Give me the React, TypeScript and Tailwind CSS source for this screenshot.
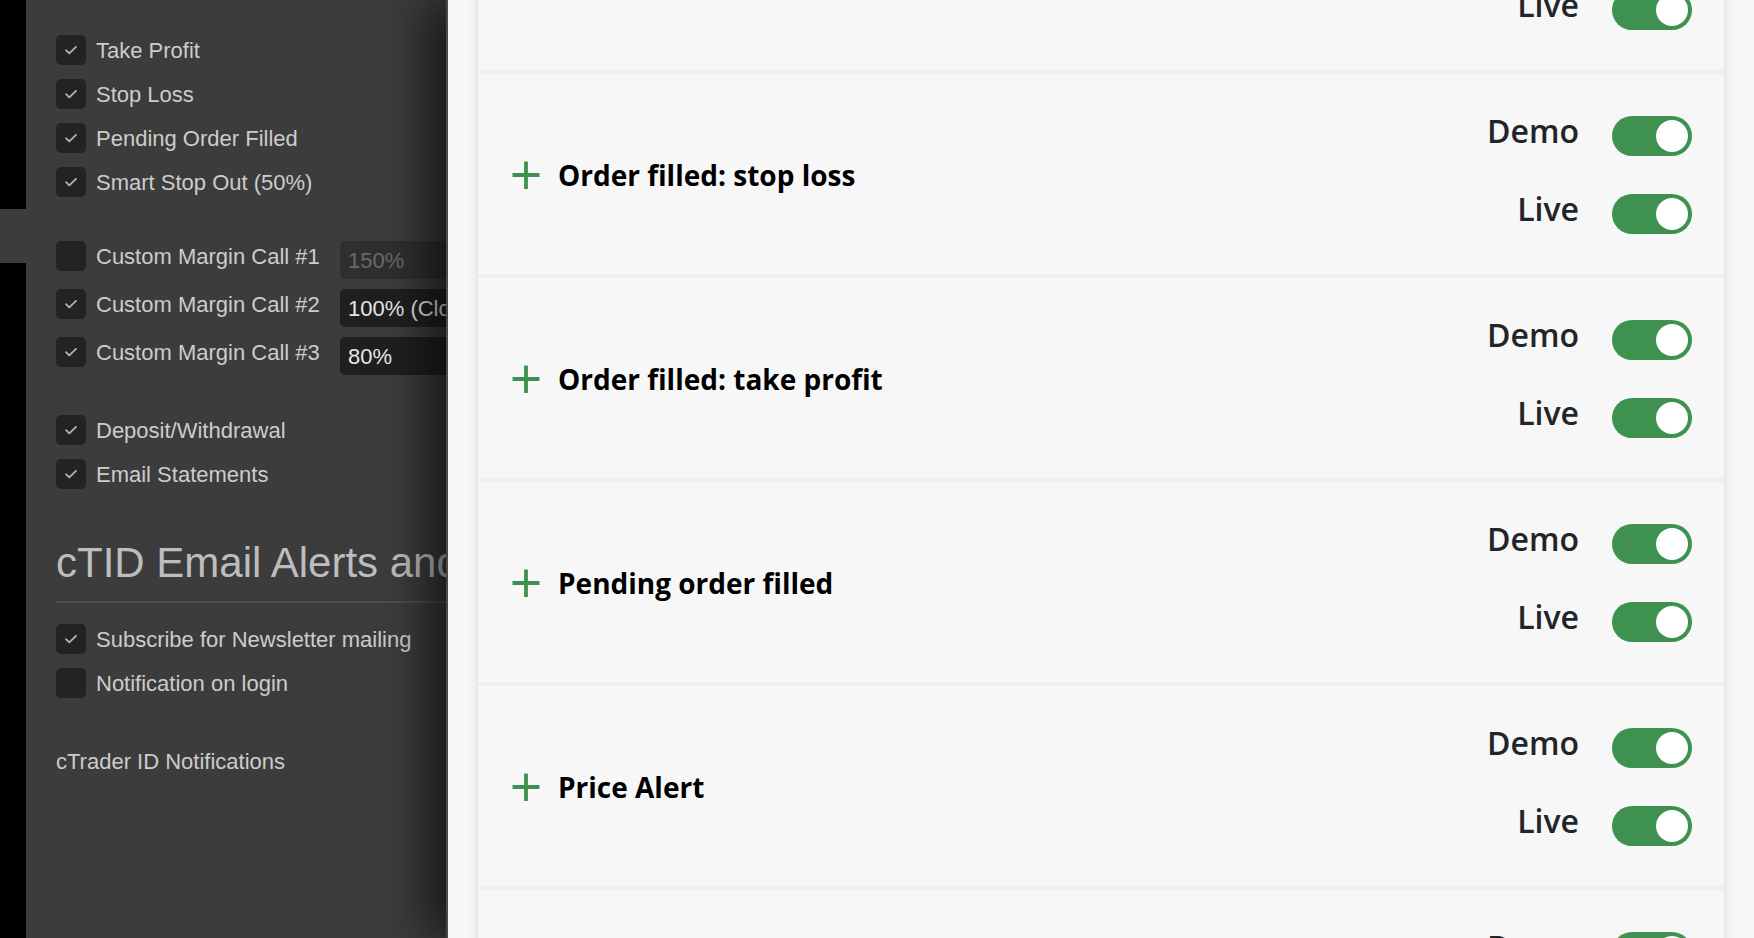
import React from 'react';

interface CheckRowProps {
  label: string;
  checked: boolean;
}

const CheckBox: React.FC<{ checked: boolean }> = ({ checked }) => (
  <span className="flex h-[30px] w-[30px] shrink-0 items-center justify-center rounded-[5px] bg-[#232323]">
    {checked && (
      <svg width="14" height="10" viewBox="0 0 14 10" fill="none">
        <path d="M2 5.2l3.3 3.2L12 1.8" stroke="#b4b4b4" strokeWidth="1.8" strokeLinecap="round" strokeLinejoin="round" />
      </svg>
    )}
  </span>
);

const CheckRow: React.FC<CheckRowProps> = ({ label, checked }) => (
  <div className="flex h-[30px] items-center gap-[10px]">
    <CheckBox checked={checked} />
    <span className="whitespace-nowrap text-[22px] text-[#cccccc]">{label}</span>
  </div>
);

const marginCalls = [
  { label: 'Custom Margin Call #1', checked: false, value: '150%' },
  { label: 'Custom Margin Call #2', checked: true, value: '100% (Close Out)' },
  { label: 'Custom Margin Call #3', checked: true, value: '80%' }
];

const alerts = [
  'Position closed',
  'Order filled: stop loss',
  'Order filled: take profit',
  'Pending order filled',
  'Price Alert',
  'Trailing stop triggered'
];

const PlusIcon = () => (
  <svg width="28" height="28" viewBox="0 0 28 28" className="shrink-0">
    <path d="M14 0.5v28M0.5 14h27" stroke="#3f9150" strokeWidth="3.8" />
  </svg>
);

const Toggle = () => (
  <div className="flex h-[40px] w-[80px] shrink-0 items-center justify-end rounded-full bg-[#3f9150] pr-[4px]">
    <div className="h-[32px] w-[32px] rounded-full bg-white" />
  </div>
);

const AlertCard: React.FC<{ title: string }> = ({ title }) => (
  <div className="flex h-[200px] shrink-0 items-center justify-between bg-[#f7f7f7] pl-[34px] pr-[32px]">
    <div className="flex items-center gap-[18px] pt-[2px]">
      <PlusIcon />
      <span className="font-['Open_Sans',sans-serif] text-[28px] font-bold text-black">{title}</span>
    </div>
    <div className="flex flex-col gap-[38px] pt-[2px]">
      {['Demo', 'Live'].map((env) => (
        <div key={env} className="flex h-[40px] items-center justify-end gap-[33px]">
          <span className="-mt-[10px] font-['Open_Sans',sans-serif] text-[32px] font-semibold text-[#212529]">{env}</span>
          <Toggle />
        </div>
      ))}
    </div>
  </div>
);

export default function App() {
  return (
    <div className="flex h-[938px] w-full overflow-hidden bg-[#f7f7f7] font-['Liberation_Sans',Arial,sans-serif]">
      {/* nav strip */}
      <div className="flex w-[26px] shrink-0 flex-col">
        <div className="h-[209px] bg-black" />
        <div className="h-[54px] bg-[#3c3c3c]" />
        <div className="flex-1 bg-black" />
      </div>

      {/* settings panel */}
      <div className="w-[420px] shrink-0 overflow-hidden bg-[#3c3c3c] pl-[30px] pt-[35px]">
        <div className="flex flex-col gap-[14px]">
          <CheckRow label="Take Profit" checked />
          <CheckRow label="Stop Loss" checked />
          <CheckRow label="Pending Order Filled" checked />
          <CheckRow label="Smart Stop Out (50%)" checked />
        </div>

        <div className="mt-[44px] flex flex-col gap-[10px]">
          {marginCalls.map((m) => (
            <div key={m.label} className="flex items-start">
              <div className="w-[284px] shrink-0">
                <CheckRow label={m.label} checked={m.checked} />
              </div>
              <div
                className={
                  m.checked
                    ? 'flex h-[38px] w-[106px] shrink-0 items-center overflow-hidden whitespace-nowrap rounded-l-[5px] bg-[#1f1f1f] pl-[8px] pt-[1px] text-[22px] text-[#e6e6e6]'
                    : 'flex h-[38px] w-[106px] shrink-0 items-center overflow-hidden whitespace-nowrap rounded-l-[5px] bg-[#2f2f2f] pl-[8px] pt-[1px] text-[22px] text-[#6a6a6a]'
                }
              >
                {m.value}
              </div>
            </div>
          ))}
        </div>

        <div className="mt-[40px] flex flex-col gap-[14px]">
          <CheckRow label="Deposit/Withdrawal" checked />
          <CheckRow label="Email Statements" checked />
        </div>

        <h2 className="mt-[50px] w-[390px] overflow-hidden whitespace-nowrap text-[42px] leading-[48px] text-[#bdbdbd]">
          cTID Email Alerts and Notifications
        </h2>
        <div className="mt-[14px] h-[2px] w-[390px] bg-[#4e4e4e]" />

        <div className="mt-[21px] flex flex-col gap-[14px]">
          <CheckRow label="Subscribe for Newsletter mailing" checked />
          <CheckRow label="Notification on login" checked={false} />
        </div>

        <p className="mt-[49px] text-[22px] leading-[30px] text-[#cccccc]">cTrader ID Notifications</p>
      </div>

      {/* alerts panel */}
      <div className="relative z-10 flex-1 overflow-hidden border-l-2 border-[#4a4a4a] bg-[#f7f7f7] px-[30px] shadow-[-22px_0_40px_rgba(0,0,0,0.55)]">
        <div className="-mt-[130px] flex flex-col gap-[4px] bg-[#efefef] shadow-[0_0_10px_rgba(0,0,0,0.13)]">
          {alerts.map((a) => (
            <AlertCard key={a} title={a} />
          ))}
        </div>
      </div>
    </div>
  );
}
